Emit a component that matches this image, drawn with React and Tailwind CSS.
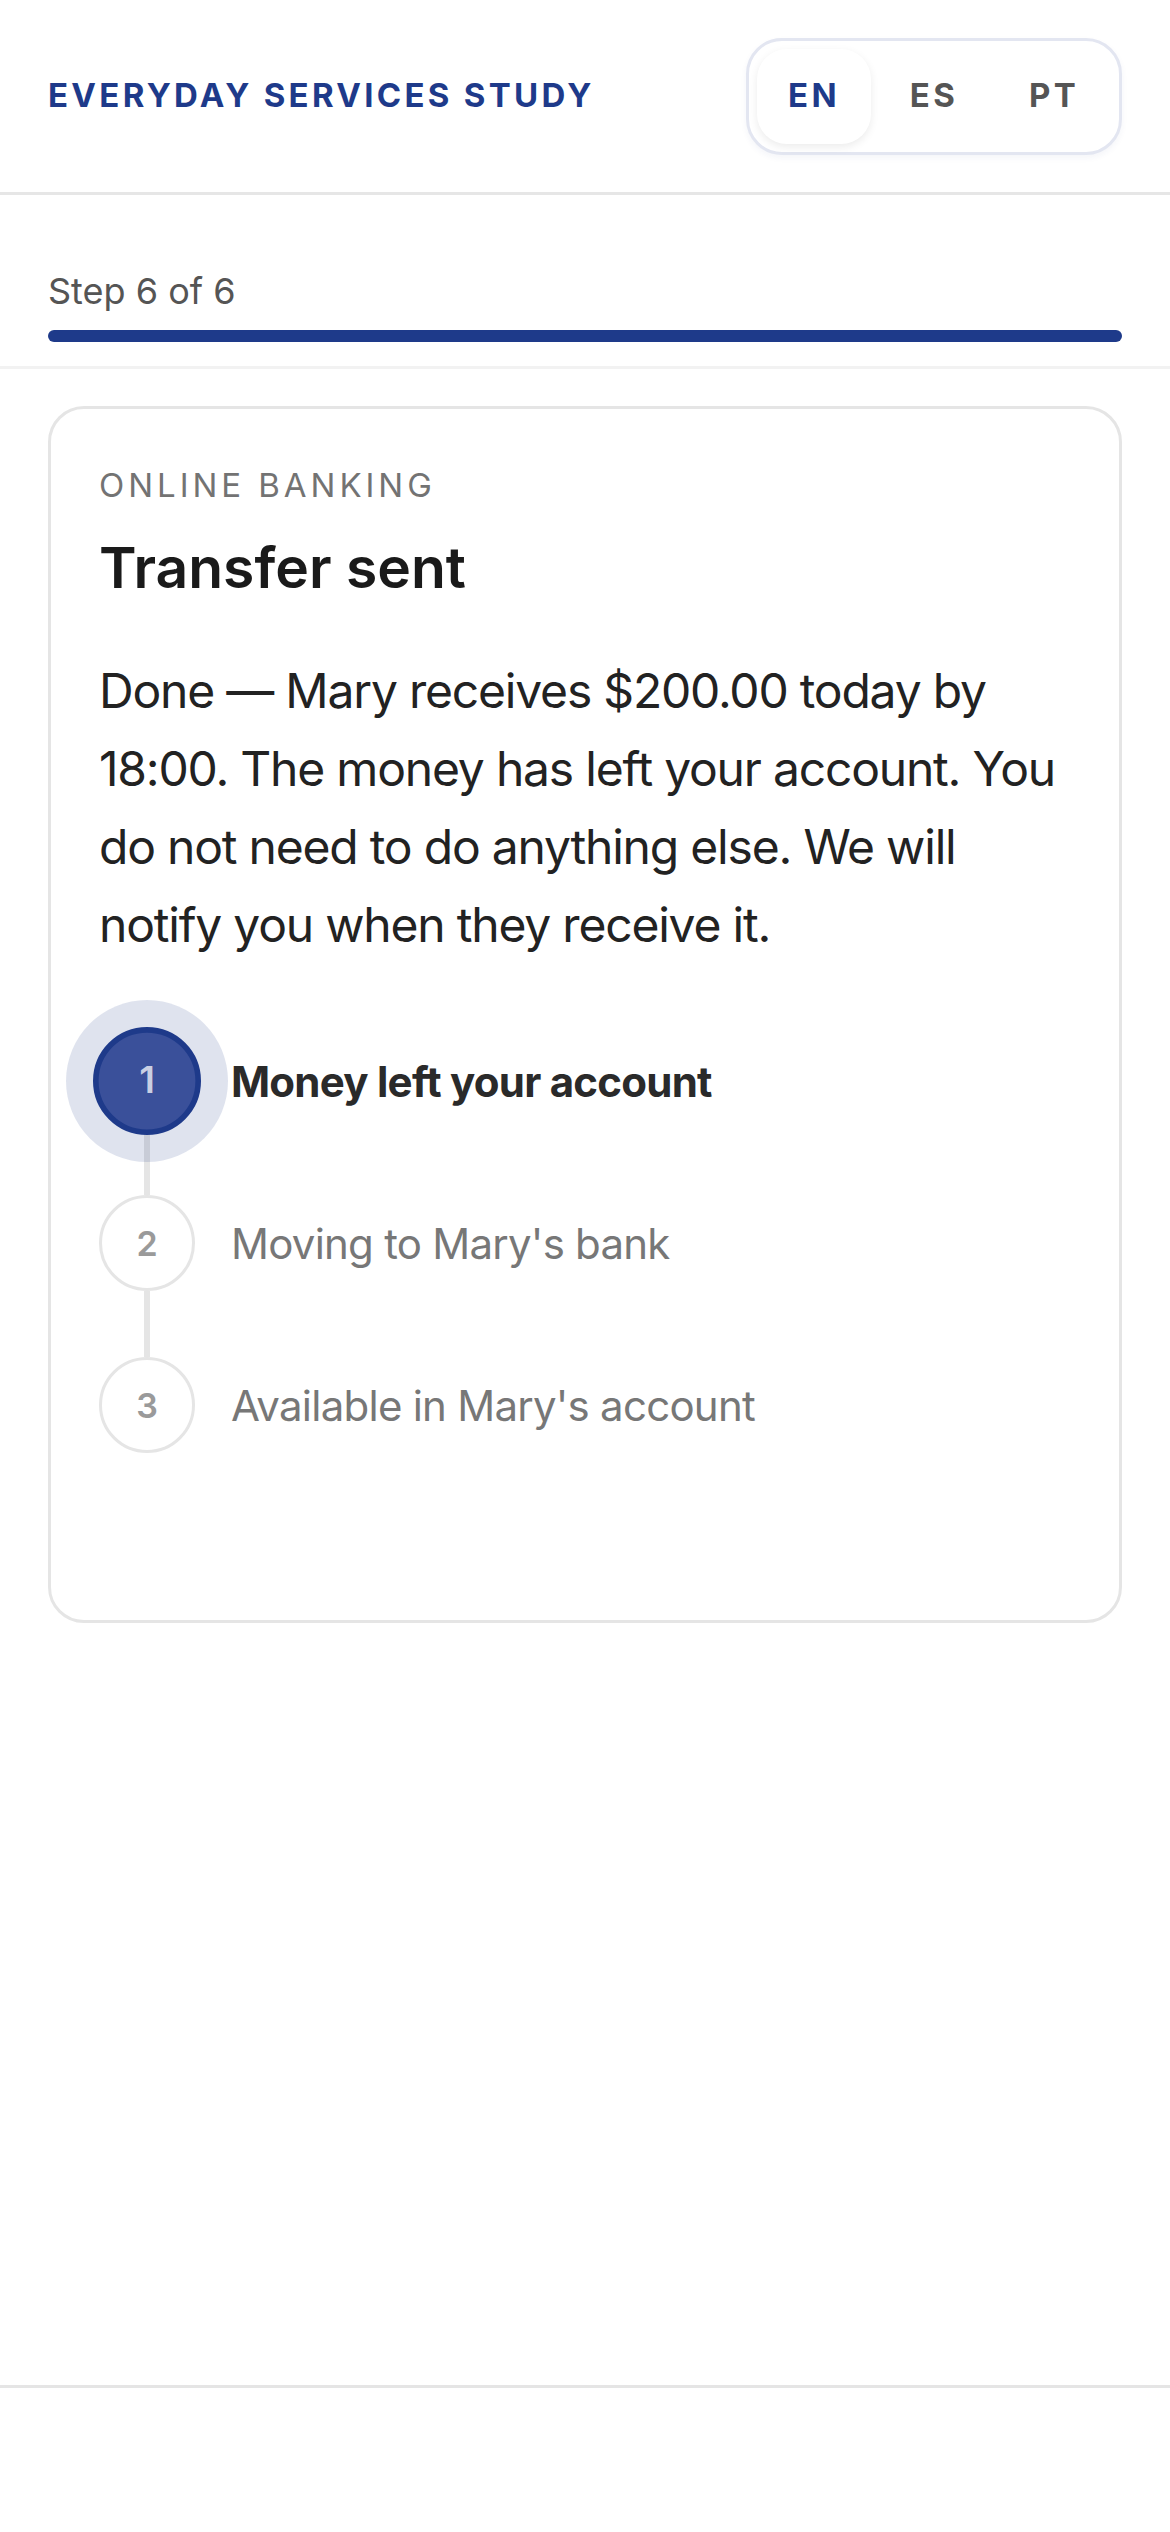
import React from "react";

const steps = [
  { n: 1, label: "Money left your account", active: true },
  { n: 2, label: "Moving to Mary's bank", active: false },
  { n: 3, label: "Available in Mary's account", active: false },
];

function LangToggle() {
  return (
    <div className="flex gap-[6px] p-[8px] border-[3px] border-[#e3e6f1] rounded-[36px] bg-white shadow-[0_3px_6px_rgba(30,58,138,0.05)]">
      <button className="w-[114px] h-[95px] rounded-[30px] bg-white shadow-[0_3px_9px_rgba(0,0,0,0.08)] text-[33px] font-bold tracking-[0.1em] text-[#1e3a8a]">
        EN
      </button>
      <button className="w-[114px] h-[95px] rounded-[30px] text-[33px] font-bold tracking-[0.1em] text-[#555555]">
        ES
      </button>
      <button className="w-[114px] h-[95px] rounded-[30px] text-[33px] font-bold tracking-[0.1em] text-[#555555]">
        PT
      </button>
    </div>
  );
}

function StepRow({ n, label, active, last }) {
  return (
    <div className="flex gap-[36px]">
      <div className="flex flex-col items-center w-[96px]">
        {active ? (
          <div className="relative z-10 w-[96px] h-[96px] rounded-full scale-[1.125] bg-[#3a509a] border-[5px] border-[#1e3a8a] shadow-[0_0_0_24px_rgba(30,58,138,0.14)] flex items-center justify-center text-[33px] font-semibold text-[#c9cfe3]">
            {n}
          </div>
        ) : (
          <div className="w-[96px] h-[96px] rounded-full border-[3px] border-[#e5e5e5] bg-white flex items-center justify-center text-[34px] font-semibold text-[#9a9a9a]">
            {n}
          </div>
        )}
        {!last && <div className="w-[6px] h-[66px] bg-[#e5e5e5]" />}
      </div>
      <div
        className={`h-[96px] flex items-center text-[42px] tracking-[-0.018em] ${
          active ? "font-bold text-[#2a2a2a]" : "text-[#777777]"
        }`}
      >
        {label}
      </div>
    </div>
  );
}

export default function App() {
  return (
    <div className="min-h-[2532px] flex flex-col bg-white font-[Inter,'Noto_Sans',sans-serif]">
      <header className="h-[195px] px-[48px] flex items-center justify-between border-b-[3px] border-[#e6e6e6]">
        <h1 className="text-[33px] font-bold tracking-[0.1em] text-[#1e3a8a]">EVERYDAY SERVICES STUDY</h1>
        <LangToggle />
      </header>

      <main className="flex-1">
        <div className="px-[48px] pt-[72px] pb-[24px] border-b-[3px] border-[#f2f2f2]">
          <p className="text-[36px] leading-[48px] text-[#555555]">Step 6 of 6</p>
          <div className="mt-[15px] h-[12px] rounded-full bg-[#1e3a8a]" />
        </div>

        <div className="mx-[48px] mt-[37px] border-[3px] border-[#e5e5e5] rounded-[36px] px-[48px] pt-[52px] pb-[48px]">
          <p className="text-[33px] leading-[48px] tracking-[0.12em] text-[#737373]">ONLINE BANKING</p>
          <h2 className="mt-[23px] text-[57px] leading-[71px] font-semibold text-[#1a1a1a]">Transfer sent</h2>
          <p className="mt-[49px] text-[48px] leading-[78px] tracking-[-0.025em] text-[#222222]">
            Done — Mary receives $200.00 today by 18:00. The money has left your account. You do not need to do
            anything else. We will notify you when they receive it.
          </p>

          <div className="mt-[69px] mb-[119px]">
            {steps.map((s, i) => (
              <StepRow key={s.n} {...s} last={i === steps.length - 1} />
            ))}
          </div>
        </div>
      </main>

      <footer className="h-[147px] border-t-[3px] border-[#e5e5e5] bg-white" />
    </div>
  );
}
